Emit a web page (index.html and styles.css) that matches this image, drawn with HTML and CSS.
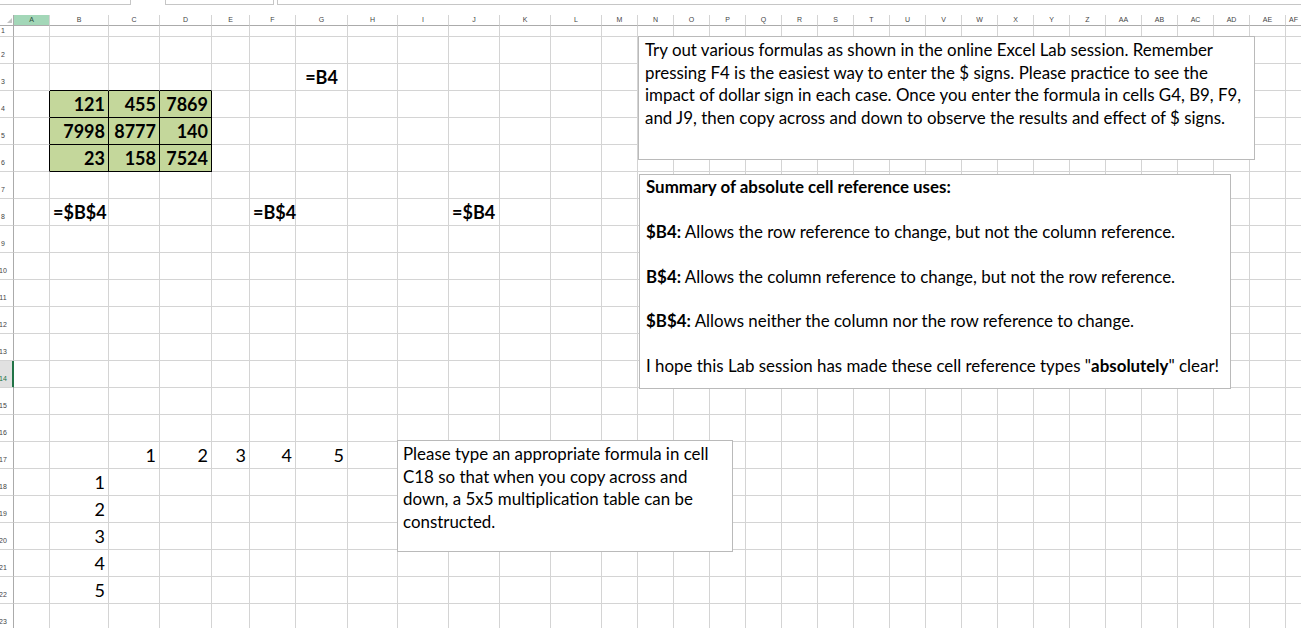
FILE: index.html
```html
<!DOCTYPE html>
<html lang="en">
<head>
<meta charset="utf-8">
<title>Absolute cell references</title>
<link rel="stylesheet" href="styles.css">
</head>
<body>
<div class="app">
  <div class="topbar"><span class="tb1"></span><span class="tb2"></span><span class="tb3"></span></div>
  <div class="sheet">
    <div class="r hdr"><span class="corner"></span><span class="csel">A</span><span>B</span><span>C</span><span>D</span><span>E</span><span>F</span><span>G</span><span>H</span><span>I</span><span>J</span><span>K</span><span>L</span><span>M</span><span>N</span><span>O</span><span>P</span><span>Q</span><span>R</span><span>S</span><span>T</span><span>U</span><span>V</span><span>W</span><span>X</span><span>Y</span><span>Z</span><span>AA</span><span>AB</span><span>AC</span><span>AD</span><span>AE</span><span class="last">AF</span></div>
    <div class="r r1"><span class="rh">1</span><span></span><span></span><span></span><span></span><span></span><span></span><span></span><span></span><span></span><span></span><span></span><span></span><span class="rest"></span></div>
    <div class="r"><span class="rh">2</span><span></span><span></span><span></span><span></span><span></span><span></span><span></span><span></span><span></span><span></span><span></span><span></span><span class="rest"></span></div>
    <div class="r"><span class="rh">3</span><span></span><span class="bb"></span><span class="bb"></span><span class="bb"></span><span></span><span></span><span class="b m">=B4</span><span></span><span></span><span></span><span></span><span></span><span class="rest"></span></div>
    <div class="r"><span class="rh">4</span><span class="brk"></span><span class="g n b">121</span><span class="g n b">455</span><span class="g n b">7869</span><span></span><span></span><span></span><span></span><span></span><span></span><span></span><span></span><span class="rest"></span></div>
    <div class="r"><span class="rh">5</span><span class="brk"></span><span class="g n b">7998</span><span class="g n b">8777</span><span class="g n b">140</span><span></span><span></span><span></span><span></span><span></span><span></span><span></span><span></span><span class="rest"></span></div>
    <div class="r"><span class="rh">6</span><span class="brk"></span><span class="g n b">23</span><span class="g n b">158</span><span class="g n b">7524</span><span></span><span></span><span></span><span></span><span></span><span></span><span></span><span></span><span class="rest"></span></div>
    <div class="r"><span class="rh">7</span><span></span><span></span><span></span><span></span><span></span><span></span><span></span><span></span><span></span><span></span><span></span><span></span><span class="rest"></span></div>
    <div class="r"><span class="rh">8</span><span></span><span class="b">=$B$4</span><span></span><span></span><span></span><span class="b">=B$4</span><span></span><span></span><span></span><span class="b">=$B4</span><span></span><span></span><span class="rest"></span></div>
    <div class="r"><span class="rh">9</span><span></span><span></span><span></span><span></span><span></span><span></span><span></span><span></span><span></span><span></span><span></span><span></span><span class="rest"></span></div>
    <div class="r"><span class="rh">10</span><span></span><span></span><span></span><span></span><span></span><span></span><span></span><span></span><span></span><span></span><span></span><span></span><span class="rest"></span></div>
    <div class="r"><span class="rh">11</span><span></span><span></span><span></span><span></span><span></span><span></span><span></span><span></span><span></span><span></span><span></span><span></span><span class="rest"></span></div>
    <div class="r"><span class="rh">12</span><span></span><span></span><span></span><span></span><span></span><span></span><span></span><span></span><span></span><span></span><span></span><span></span><span class="rest"></span></div>
    <div class="r"><span class="rh">13</span><span></span><span></span><span></span><span></span><span></span><span></span><span></span><span></span><span></span><span></span><span></span><span></span><span class="rest"></span></div>
    <div class="r"><span class="rh sel">14</span><span></span><span></span><span></span><span></span><span></span><span></span><span></span><span></span><span></span><span></span><span></span><span></span><span class="rest"></span></div>
    <div class="r"><span class="rh">15</span><span></span><span></span><span></span><span></span><span></span><span></span><span></span><span></span><span></span><span></span><span></span><span></span><span class="rest"></span></div>
    <div class="r"><span class="rh">16</span><span></span><span></span><span></span><span></span><span></span><span></span><span></span><span></span><span></span><span></span><span></span><span></span><span class="rest"></span></div>
    <div class="r"><span class="rh">17</span><span></span><span></span><span class="n">1</span><span class="n">2</span><span class="n">3</span><span class="n">4</span><span class="n">5</span><span></span><span></span><span></span><span></span><span></span><span class="rest"></span></div>
    <div class="r"><span class="rh">18</span><span></span><span class="n">1</span><span></span><span></span><span></span><span></span><span></span><span></span><span></span><span></span><span></span><span></span><span class="rest"></span></div>
    <div class="r"><span class="rh">19</span><span></span><span class="n">2</span><span></span><span></span><span></span><span></span><span></span><span></span><span></span><span></span><span></span><span></span><span class="rest"></span></div>
    <div class="r"><span class="rh">20</span><span></span><span class="n">3</span><span></span><span></span><span></span><span></span><span></span><span></span><span></span><span></span><span></span><span></span><span class="rest"></span></div>
    <div class="r"><span class="rh">21</span><span></span><span class="n">4</span><span></span><span></span><span></span><span></span><span></span><span></span><span></span><span></span><span></span><span></span><span class="rest"></span></div>
    <div class="r"><span class="rh">22</span><span></span><span class="n">5</span><span></span><span></span><span></span><span></span><span></span><span></span><span></span><span></span><span></span><span></span><span class="rest"></span></div>
    <div class="r"><span class="rh">23</span><span></span><span></span><span></span><span></span><span></span><span></span><span></span><span></span><span></span><span></span><span></span><span></span><span class="rest"></span></div>
  </div>

  <div class="box box-top">
    <p>Try out various formulas as shown in the online Excel Lab session. Remember</p>
    <p>pressing F4 is the easiest way to enter the $ signs. Please practice to see the</p>
    <p>impact of dollar sign in each case. Once you enter the formula in cells G4, B9, F9,</p>
    <p>and J9, then copy across and down to observe the results and effect of $ signs.</p>
  </div>

  <div class="box box-sum">
    <p><strong>Summary of absolute cell reference uses:</strong></p>
    <p><strong>$B4:</strong> Allows the row reference to change, but not the column reference.</p>
    <p><strong>B$4:</strong> Allows the column reference to change, but not the row reference.</p>
    <p><strong>$B$4:</strong> Allows neither the column nor the row reference to change.</p>
    <p>I hope this Lab session has made these cell reference types "<strong>absolutely</strong>" clear!</p>
  </div>

  <div class="box box-bot">
    <p>Please type an appropriate formula in cell</p>
    <p>C18 so that when you copy across and</p>
    <p>down, a 5x5 multiplication table can be</p>
    <p>constructed.</p>
  </div>
</div>
</body>
</html>
```

FILE: styles.css
```css
html, body {
  margin: 0;
  padding: 0;
  overflow: hidden;
  background: #fff;
}

.app {
  position: relative;
  width: 1301px;
  height: 628px;
  overflow: hidden;
  font-family: Lato, "Liberation Sans", sans-serif;
  color: #000;
}

/* remnants of the formula bar above the grid */
.topbar {
  display: flex;
  height: 15px;
}
.tb1, .tb2, .tb3 {
  height: 5px;
  box-sizing: border-box;
  border-bottom: 1px solid #c6c6c6;
}
.tb1 {
  width: 131px;
  border-right: 1px solid #c6c6c6;
}
.tb2 {
  margin-left: 34px;
  width: 109px;
  border-left: 1px solid #c6c6c6;
  border-right: 1px solid #c6c6c6;
}
.tb3 {
  margin-left: 3px;
  flex: 1;
  border-left: 1px solid #c6c6c6;
}

/* grid */
.r {
  display: grid;
  width: 1322px;
  height: 27px;
  grid-template-columns: 14px 36px 59px 51px 52px 38px 46px 52px 50px 51px 51px 51px 51px repeat(20, 36px);
}
.r > span {
  box-sizing: border-box;
  min-width: 0;
  display: flex;
  align-items: flex-end;
  padding: 0 3px 2px;
  border-right: 1px solid #d4d4d4;
  border-bottom: 1px solid #d4d4d4;
  font-size: 18px;
  line-height: 21px;
  white-space: nowrap;
}
.r > .rest {
  grid-column: 14 / -1;
  border-right: 0;
  background: repeating-linear-gradient(90deg, transparent 0 35px, #d4d4d4 35px 36px);
}

/* headers */
.hdr { height: 11px; }
.r1 { height: 11px; }
.hdr > span {
  padding: 0;
  align-items: center;
  justify-content: center;
  font: 7px/8px "Liberation Sans", Arial, sans-serif;
  color: #444;
  border-bottom-color: #ababab;
}
.hdr > .last {
  justify-content: flex-start;
  padding-left: 3px;
}
.hdr > .csel {
  background: #a3d7b8;
  color: #2b4d38;
}
.hdr > .corner {
  justify-content: flex-end;
  align-items: flex-end;
  padding: 0 1px 2px 0;
  border-right-color: #ababab;
}
.corner::after {
  content: "";
  width: 0;
  height: 0;
  border-left: 5px solid transparent;
  border-bottom: 5px solid #c3c3c3;
}
.r > .rh {
  justify-content: center;
  padding: 0 7px 4px 0;
  font: 7px/8px "Liberation Sans", Arial, sans-serif;
  color: #444;
  border-right-color: #ababab;
}
.r1 > .rh {
  align-items: center;
  padding-bottom: 0;
}
.r > .rh.sel {
  background: #e1e1e1;
  color: #217346;
  border-right-color: #217346;
  box-shadow: inset -1px 0 #217346;
}

/* cell formats */
.b { font-weight: 700; }
.n { justify-content: flex-end; }
.m { justify-content: center; }
.r > .g {
  background: #c4d79b;
  border-right-color: #000;
  border-bottom-color: #000;
}
.r > .bb { border-bottom-color: #000; }
.r > .brk { border-right-color: #000; }

/* floating text boxes */
.box {
  position: absolute;
  box-sizing: border-box;
  background: #fff;
  border: 1px solid #bababa;
  font-size: 16.9px;
  line-height: 22.5px;
  color: #000;
}
.box p {
  margin: 0;
  white-space: nowrap;
}
.box-top {
  left: 638px;
  top: 36px;
  width: 617px;
  height: 124px;
  padding: 2px 6px 1px;
}
.box-sum {
  left: 639px;
  top: 174px;
  width: 592px;
  height: 215px;
  padding: 1px 6px;
}
.box-sum p + p {
  margin-top: 22.4px;
}
.box-sum p {
  line-height: 22.4px;
}
.box-bot {
  left: 397px;
  top: 440px;
  width: 336px;
  height: 112px;
  padding: 2px 5px;
}
```
